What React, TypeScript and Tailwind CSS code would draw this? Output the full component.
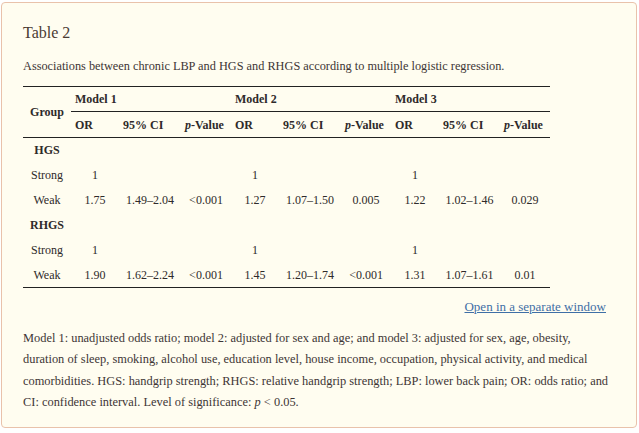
const serif = { fontFamily: '"Liberation Serif", "DejaVu Serif", serif' };

type Row = { group: string; bold?: boolean; cells?: string[] };

const rows: Row[] = [
  { group: "HGS", bold: true },
  { group: "Strong", cells: ["1", "", "", "1", "", "", "1", "", ""] },
  { group: "Weak", cells: ["1.75", "1.49–2.04", "<0.001", "1.27", "1.07–1.50", "0.005", "1.22", "1.02–1.46", "0.029"] },
  { group: "RHGS", bold: true },
  { group: "Strong", cells: ["1", "", "", "1", "", "", "1", "", ""] },
  { group: "Weak", cells: ["1.90", "1.62–2.24", "<0.001", "1.45", "1.20–1.74", "<0.001", "1.31", "1.07–1.61", "0.01"] },
];

function PValue() {
  return (
    <>
      <i>p</i>-Value
    </>
  );
}

export default function App() {
  return (
    <div className="pt-[2px] pl-[1px] bg-white" style={serif}>
      <div className="w-[636px] h-[426px] border border-[#e9c2ab] rounded-[4px] bg-[#fffdf0] pl-[21px] pr-[20px] pt-[20px] text-[#333]">
        <h2 className="text-[16px] leading-[20px] text-[#4a3b33]">Table 2</h2>
        <p className="mt-[15px] text-[12.3px] leading-[16px] text-[#3d3535]">
          Associations between chronic LBP and HGS and RHGS according to multiple logistic regression.
        </p>
        <table className="mt-[12px] table-fixed border-collapse text-[12px] text-[#2e2a2a] w-[527px]">
          <colgroup>
            <col className="w-[48px]" />
            <col className="w-[48px]" />
            <col className="w-[62px]" />
            <col className="w-[50px]" />
            <col className="w-[48px]" />
            <col className="w-[62px]" />
            <col className="w-[50px]" />
            <col className="w-[48px]" />
            <col className="w-[61px]" />
            <col className="w-[50px]" />
          </colgroup>
          <thead className="font-bold">
            <tr className="border-t border-[#222] h-[25px]">
              <th rowSpan={2} className="text-center align-middle border-b border-[#222]">Group</th>
              <th colSpan={3} className="text-left pl-[4px] border-b border-[#222]">Model 1</th>
              <th colSpan={3} className="text-left pl-[4px] border-b border-[#222]">Model 2</th>
              <th colSpan={3} className="text-left pl-[4px] border-b border-[#222]">Model 3</th>
            </tr>
            <tr className="border-b border-[#222] h-[26px]">
              <th className="text-left pl-[4px]">OR</th>
              <th className="text-left pl-[4px]">95% CI</th>
              <th className="text-left pl-[4px] whitespace-nowrap"><PValue /></th>
              <th className="text-left pl-[4px]">OR</th>
              <th className="text-left pl-[4px]">95% CI</th>
              <th className="text-left pl-[4px] whitespace-nowrap"><PValue /></th>
              <th className="text-left pl-[4px]">OR</th>
              <th className="text-left pl-[4px]">95% CI</th>
              <th className="text-left pl-[4px] whitespace-nowrap"><PValue /></th>
            </tr>
          </thead>
          <tbody>
            {rows.map((r, i) => (
              <tr key={i} className={"h-[25px] " + (i === rows.length - 1 ? "border-b border-[#222]" : "")}>
                <td className={"text-center " + (r.bold ? "font-bold" : "")}>{r.group}</td>
                {(r.cells ?? ["", "", "", "", "", "", "", "", ""]).map((c, j) => (
                  <td key={j} className="text-center whitespace-nowrap">{c}</td>
                ))}
              </tr>
            ))}
          </tbody>
        </table>
        <div className="mt-[11px] flex justify-end pr-[10px]">
          <a href="#" className="text-[13px] leading-[16px] text-[#3f6fa6] underline">Open in a separate window</a>
        </div>
        <p className="mt-[13px] w-[587px] text-[12.4px] leading-[21.3px] text-[#3d3535]">
          Model 1: unadjusted odds ratio; model 2: adjusted for sex and age; and model 3: adjusted for sex, age, obesity,
          duration of sleep, smoking, alcohol use, education level, house income, occupation, physical activity, and medical
          comorbidities. HGS: handgrip strength; RHGS: relative handgrip strength; LBP: lower back pain; OR: odds ratio; and
          CI: confidence interval. Level of significance: <i>p</i> &lt; 0.05.
        </p>
      </div>
    </div>
  );
}
